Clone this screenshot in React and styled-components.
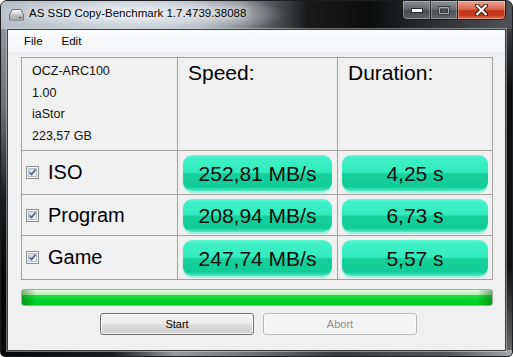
import React from "react";
import styled, { createGlobalStyle } from "styled-components";

const GlobalStyle = createGlobalStyle`
  html, body { margin: 0; padding: 0; background: #ffffff; }
  body { font-family: "Liberation Sans", Arial, sans-serif; }
  * { box-sizing: border-box; }
`;

const Window = styled.div`
  width: 513px;
  height: 357px;
  border: 1px solid #1c1e20;
  border-radius: 7px 7px 5px 5px;
  display: flex;
  flex-direction: column;
  overflow: hidden;
  background:
    linear-gradient(to right, #060606 0%, #1c1c1c 22%, #9a9a9a 34%, #7a7a7a 46%, #3a3a3a 66%, #575757 88%, #a8a8a8 100%) left bottom / 100% 6px no-repeat,
    linear-gradient(to bottom, #4c5054 0%, #0c0c0c 25%, #111111 75%, #6c6c6c 100%) right top / 7px 100% no-repeat,
    linear-gradient(to bottom, #9aa1a8 0%, #6c7176 30%, #1d1e1f 55%, #050505 80%, #0b0b0b 100%);
`;

const TitleBar = styled.div`
  height: 28px;
  flex: none;
  display: flex;
  align-items: flex-start;
  padding-left: 8px;
  padding-right: 6px;
  background:
    radial-gradient(ellipse 150px 22px at 135px 13px, rgba(242, 245, 248, 0.95) 0%, rgba(222, 228, 234, 0.7) 50%, rgba(200, 206, 212, 0) 100%),
    linear-gradient(to right, #b7bec5 0%, #aab1b8 35%, #7d8287 48%, #1a1a1a 60%, #0c0c0c 72%, #2e3033 85%, #505357 100%);
`;

const AppIcon = styled.div`
  margin-top: 7px;
  width: 15px;
  height: 13px;
  display: flex;
`;

const Title = styled.div`
  margin-left: 5px;
  font-size: 11.5px;
  line-height: 25px;
  color: #000;
  white-space: nowrap;
  text-shadow: 0 0 6px rgba(255, 255, 255, 0.9), 0 0 10px rgba(255, 255, 255, 0.8);
`;

const Captions = styled.div`
  margin-left: auto;
  display: flex;
`;

const CaptionButton = styled.div`
  width: ${(p) => p.$w}px;
  height: 19px;
  display: flex;
  align-items: center;
  justify-content: center;
  border: 1px solid rgba(18, 18, 18, 0.9);
  border-top: none;
  margin-left: -1px;
  box-shadow: inset 0 0 0 1px rgba(255, 255, 255, 0.3);
  border-bottom-left-radius: ${(p) => (p.$first ? 5 : 0)}px;
  border-bottom-right-radius: ${(p) => (p.$last ? 5 : 0)}px;
  background: ${(p) =>
    p.$close
      ? "linear-gradient(to bottom, #e9a593 0%, #d9674f 45%, #c5361c 55%, #c43a1f 80%, #e5735b 100%)"
      : "linear-gradient(to bottom, rgba(205,210,215,0.6) 0%, rgba(150,156,162,0.55) 45%, rgba(95,100,106,0.6) 55%, rgba(125,130,136,0.65) 100%)"};
`;

const Client = styled.div`
  flex: 1;
  margin: 0 6px 5px 6px;
  border: 1px solid #3b3e41;
  box-shadow: 0 0 0 1px rgba(225, 228, 232, 0.45);
  background: #f0f0f0;
  display: flex;
  flex-direction: column;
`;

const MenuBar = styled.div`
  height: 22px;
  flex: none;
  display: flex;
  align-items: center;
  gap: 19px;
  padding-left: 16px;
  background: linear-gradient(to bottom, #fbfcfd 0%, #f2f4f7 100%);
`;

const MenuItem = styled.span`
  font-size: 11.5px;
  color: #000;
`;

const Body = styled.div`
  display: flex;
  flex-direction: column;
  padding: 5px 12px 0 13px;
`;

const Table = styled.div`
  display: grid;
  grid-template-columns: 155px 159px 154px;
  grid-template-rows: 92px 43px 40px 43px;
  gap: 1px;
  padding: 1px;
  background: #a0a0a0;
  width: 472px;
`;

const InfoCell = styled.div`
  background: #f0f0f0;
  padding: 3px 0 0 10px;
  font-size: 12.5px;
  line-height: 21.5px;
  color: #111;
`;

const HeaderCell = styled.div`
  background: #f0f0f0;
  padding: 3px 0 0 10px;
  font-size: 21px;
  line-height: 24px;
  color: #000;
`;

const LabelCell = styled.div`
  background: #f0f0f0;
  display: flex;
  align-items: center;
  gap: 9px;
  padding-left: 4px;
  font-size: 20px;
  color: #000;
`;

const BarCell = styled.div`
  background: #f0f0f0;
  padding: 4px ${(p) => p.$side}px 3px ${(p) => p.$side}px;
  display: flex;
`;

const ResultBar = styled.div`
  flex: 1;
  border-radius: 9px;
  display: flex;
  align-items: center;
  justify-content: center;
  font-size: 21px;
  line-height: 1;
  color: #0d0d0d;
  background: linear-gradient(to bottom, #64f6d6 0%, #3ef0c6 10%, #33ebbf 48%, #17d19d 52%, #12cc97 88%, #4fe9c3 100%);
  box-shadow: 0 2px 1px rgba(90, 240, 200, 0.55);
`;

const Progress = styled.div`
  margin-top: 9px;
  height: 17px;
  width: 472px;
  border: 1px solid #a9a9a9;
  border-radius: 3px;
  background:
    linear-gradient(to right, rgba(0, 90, 0, 0.45) 0%, rgba(0, 90, 0, 0) 3%, rgba(0, 90, 0, 0) 97%, rgba(0, 90, 0, 0.45) 100%),
    linear-gradient(to bottom, #e4f9e4 0%, #b6f1b6 30%, #22da40 36%, #00d52a 70%, #00c626 100%);
`;

const ButtonRow = styled.div`
  margin-top: 7px;
  display: flex;
  justify-content: center;
  gap: 9px;
  padding-left: 3px;
`;

const Button = styled.div`
  width: 154px;
  height: 22px;
  border-radius: 3px;
  display: flex;
  align-items: center;
  justify-content: center;
  font-size: 11px;
  border: 1px solid ${(p) => (p.$disabled ? "#b4b8bb" : "#707070")};
  color: ${(p) => (p.$disabled ? "#8f8f8f" : "#000")};
  background: ${(p) =>
    p.$disabled
      ? "#f4f4f4"
      : "linear-gradient(to bottom, #f3f3f3 0%, #ebebeb 48%, #dddddd 52%, #cfcfcf 100%)"};
  box-shadow: inset 0 0 0 1px rgba(255, 255, 255, 0.7);
`;

const DriveIcon = () => (
  <svg width="15" height="13" viewBox="0 0 15 13">
    <defs>
      <linearGradient id="hdg" x1="0" y1="0" x2="0" y2="1">
        <stop offset="0" stopColor="#f6f6f6" />
        <stop offset="1" stopColor="#a0a0a0" />
      </linearGradient>
    </defs>
    <path d="M3 1.5 H12 L14.5 7 V12 H0.5 V7 Z" fill="url(#hdg)" stroke="#707070" />
    <rect x="1" y="7.5" width="13" height="4" fill="#b4b4b4" />
    <rect x="10" y="9" width="2.5" height="1.2" fill="#5a5a5a" />
  </svg>
);

const MinGlyph = () => (
  <svg width="12" height="5" viewBox="0 0 12 5">
    <rect x="0.5" y="0.5" width="11" height="4" fill="#ffffff" stroke="#2a2a2a" />
  </svg>
);

const MaxGlyph = () => (
  <svg width="12" height="9" viewBox="0 0 12 9">
    <rect x="0.5" y="0.5" width="11" height="8" fill="none" stroke="#3a3a3a" />
    <rect x="1.5" y="1.5" width="9" height="6" fill="none" stroke="#a8aeb3" />
    <rect x="2.5" y="3.5" width="7" height="3" fill="none" stroke="#3a3a3a" />
  </svg>
);

const CloseGlyph = () => (
  <svg width="13" height="12" viewBox="0 0 13 12">
    <path d="M2 1.5 L11 10.5 M11 1.5 L2 10.5" stroke="#3a1a14" strokeWidth="4.2" strokeLinecap="square" />
    <path d="M2.2 1.7 L10.8 10.3 M10.8 1.7 L2.2 10.3" stroke="#ffffff" strokeWidth="2.2" strokeLinecap="square" />
  </svg>
);

const CheckBox = () => (
  <svg width="13" height="13" viewBox="0 0 13 13">
    <defs>
      <linearGradient id="cbg" x1="0" y1="0" x2="1" y2="1">
        <stop offset="0" stopColor="#cfd3da" />
        <stop offset="1" stopColor="#f7f8fa" />
      </linearGradient>
    </defs>
    <rect x="0.5" y="0.5" width="12" height="12" fill="#f5f5f5" stroke="#8e8f8f" />
    <rect x="2.5" y="2.5" width="8" height="8" fill="url(#cbg)" stroke="#b9bec6" />
    <path d="M3.6 6.4 L5.6 8.6 L9.6 3.4" fill="none" stroke="#4a5e9a" strokeWidth="1.6" />
  </svg>
);

const rows = [
  { name: "ISO", speed: "252,81 MB/s", time: "4,25 s" },
  { name: "Program", speed: "208,94 MB/s", time: "6,73 s" },
  { name: "Game", speed: "247,74 MB/s", time: "5,57 s" },
];

export default function App() {
  return (
    <>
      <GlobalStyle />
      <Window>
        <TitleBar>
          <AppIcon>
            <DriveIcon />
          </AppIcon>
          <Title>AS SSD Copy-Benchmark 1.7.4739.38088</Title>
          <Captions>
            <CaptionButton $w={29} $first>
              <MinGlyph />
            </CaptionButton>
            <CaptionButton $w={28}>
              <MaxGlyph />
            </CaptionButton>
            <CaptionButton $w={49} $close $last>
              <CloseGlyph />
            </CaptionButton>
          </Captions>
        </TitleBar>
        <Client>
          <MenuBar>
            <MenuItem>File</MenuItem>
            <MenuItem>Edit</MenuItem>
          </MenuBar>
          <Body>
            <Table>
              <InfoCell>
                OCZ-ARC100
                <br />
                1.00
                <br />
                iaStor
                <br />
                223,57 GB
              </InfoCell>
              <HeaderCell>Speed:</HeaderCell>
              <HeaderCell>Duration:</HeaderCell>
              {rows.map((r) => (
                <React.Fragment key={r.name}>
                  <LabelCell>
                    <CheckBox />
                    {r.name}
                  </LabelCell>
                  <BarCell $side={5}>
                    <ResultBar>{r.speed}</ResultBar>
                  </BarCell>
                  <BarCell $side={4}>
                    <ResultBar>{r.time}</ResultBar>
                  </BarCell>
                </React.Fragment>
              ))}
            </Table>
            <Progress />
            <ButtonRow>
              <Button>Start</Button>
              <Button $disabled>Abort</Button>
            </ButtonRow>
          </Body>
        </Client>
      </Window>
    </>
  );
}
